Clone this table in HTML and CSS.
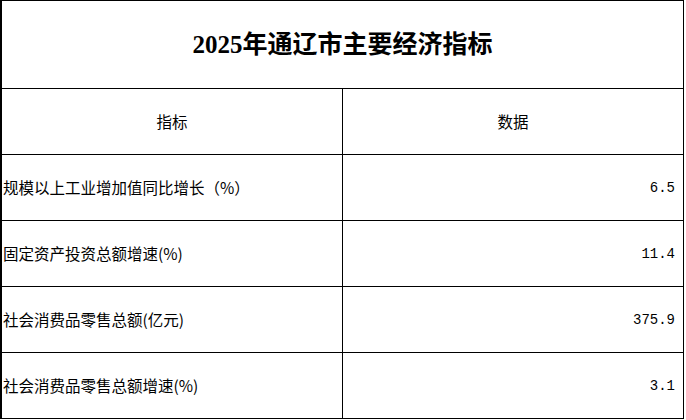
FILE: index.html
```html
<!DOCTYPE html>
<html lang="zh-CN">
<head>
<meta charset="utf-8">
<title>2025年通辽市主要经济指标</title>
<link rel="stylesheet" href="styles.css">
</head>
<body>
<table class="stats">
  <colgroup>
    <col class="col-name">
    <col class="col-value">
  </colgroup>
  <tbody>
    <tr class="row-title">
      <td class="title" colspan="2">2025年通辽市主要经济指标</td>
    </tr>
    <tr class="row-head">
      <td class="head">指标</td>
      <td class="head">数据</td>
    </tr>
    <tr class="row-data">
      <td class="name">规模以上工业增加值同比增长（%）</td>
      <td class="value">6.5</td>
    </tr>
    <tr class="row-data">
      <td class="name">固定资产投资总额增速(%)</td>
      <td class="value">11.4</td>
    </tr>
    <tr class="row-data">
      <td class="name">社会消费品零售总额(亿元)</td>
      <td class="value">375.9</td>
    </tr>
    <tr class="row-data">
      <td class="name">社会消费品零售总额增速(%)</td>
      <td class="value">3.1</td>
    </tr>
  </tbody>
</table>
</body>
</html>
```

FILE: styles.css
```css
html, body {
  margin: 0;
  padding: 0;
  background: #ffffff;
}

.stats {
  border-collapse: separate;
  border-spacing: 0;
  table-layout: fixed;
  width: 684px;
  border-top: 1px solid #000;
  border-left: 2px solid #000;
  color: #000;
  font-family: "Noto Sans CJK SC", sans-serif;
  font-size: 15.5px;
}

.col-name,
.col-value {
  width: 341px;
}

.stats td {
  border-right: 1px solid #000;
  border-bottom: 1px solid #000;
  padding: 0;
  vertical-align: middle;
  line-height: 1;
  box-sizing: border-box;
}

.row-title td {
  height: 88px;
}

.row-head td,
.row-data td {
  height: 66px;
}

.title {
  text-align: center;
  font-family: "Liberation Serif", "Noto Sans CJK SC", serif;
  font-size: 25px;
  font-weight: bold;
}

.head {
  text-align: center;
}

.name {
  text-align: left;
  padding-left: 1px !important;
}

.value {
  text-align: right;
  padding-right: 8px !important;
  font-family: "Liberation Mono", monospace;
  font-size: 14px;
}
```
